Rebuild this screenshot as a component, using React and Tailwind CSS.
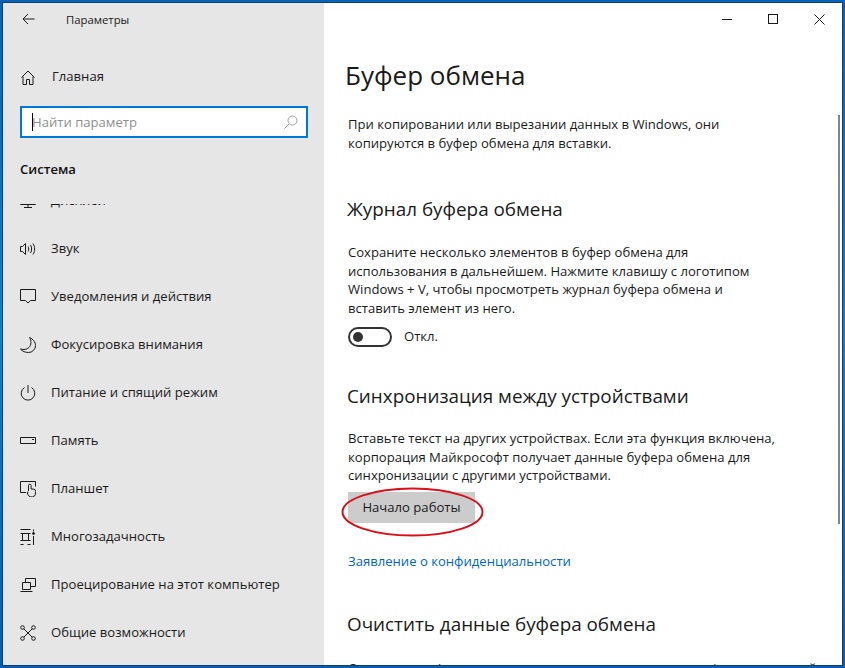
const font = { fontFamily: '"Open Sans", "Noto Sans", sans-serif' };

const s = { fill: "none", stroke: "#1a1a1a", strokeWidth: 1 };

const Ico = ({ children }) => (
  <svg width="16" height="16" viewBox="0 0 16 16" className="shrink-0" {...s}>{children}</svg>
);

const icons = {
  display: <Ico><path d="M.5 1.500h15v10H.5zM4 14.500h8M8 11.500v3" /></Ico>,
  sound: (
    <Ico>
      <path d="M.5 5.500h2l3-3v11l-3-3h-2z" />
      <path d="M8 5.500c1 1.500 1 3.500 0 5M10.500 4c1.500 2.500 1.500 5.500 0 8M13 2.500c2.200 3.500 2.200 7.500 0 11" />
    </Ico>
  ),
  notify: <Ico><path d="M.5 .5h15v11h-5l-2.500 2.500-2.500-2.500h-5z" /></Ico>,
  focus: <Ico><path d="M9.500.5c3.500 1.500 6 4.500 6 8a7 7 0 0 1-7 7c-3 0-6-1-8-3.500 3 1 6.500.5 8.500-1.500 2.500-2.500 2.500-7 .5-10z" /></Ico>,
  power: <Ico><path d="M8 0v8M4.500 2.500a6.800 6.800 0 1 0 7 0" /></Ico>,
  memory: <Ico><path d="M.5 4.500h15v6H.5zM12 6.500h2" /></Ico>,
  tablet: (
    <Ico>
      <path d="M6 11.500H.5V.5h15v5" />
      <path d="M8.500 10V4.500a1.300 1.300 0 0 1 2.600 0V8h2a2.500 2.500 0 0 1 2.500 2.500v1.500a4 4 0 0 1-7.500 2l-1-2.500 1.400-.5" fill="#e6e6e6" />
    </Ico>
  ),
  multi: (
    <Ico>
      <path d="M.5 .5h10M2.500 4.500h6v7h-6zM.5 4.500h10M.5 11.500h10M.5 15.500h3M7.500 15.500h3" />
      <path d="M13.500 .5v2M13.500 7v9" />
      <circle cx="13.500" cy="4.500" r="1" fill="#1a1a1a" />
    </Ico>
  ),
  project: (
    <Ico>
      <path d="M5.500 5V1.500h10v8h-5" />
      <path d="M2.500 5.500h8v7h-8zM.5 14.500h12" />
    </Ico>
  ),
  access: (
    <Ico>
      <circle cx="2.500" cy="2.500" r="1.800" />
      <circle cx="13.500" cy="2.500" r="1.800" />
      <circle cx="2.500" cy="13.500" r="1.800" />
      <circle cx="13.500" cy="13.500" r="1.800" />
      <path d="M3.800 3.800l8.400 8.400M12.200 3.800l-8.400 8.400" />
    </Ico>
  ),
};

const items = [
  ["Звук", "sound"],
  ["Уведомления и действия", "notify"],
  ["Фокусировка внимания", "focus"],
  ["Питание и спящий режим", "power"],
  ["Память", "memory"],
  ["Планшет", "tablet"],
  ["Многозадачность", "multi"],
  ["Проецирование на этот компьютер", "project"],
  ["Общие возможности", "access"],
];

const NavItem = ({ label, icon }) => (
  <div className="flex h-12 shrink-0 items-center pl-[17px]">
    <span className="flex w-[31px] shrink-0">{icons[icon]}</span>
    <span className="text-[13.1px] whitespace-nowrap text-[#1a1a1a]">{label}</span>
  </div>
);

const Para = ({ children, className = "" }) => (
  <p className={"text-[13.1px] leading-[18.7px] text-[#1a1a1a] " + className}>{children}</p>
);

const H2 = ({ children, className = "" }) => (
  <h2 className={"-ml-px text-[18.85px] leading-[26px] font-normal text-[#1a1a1a] " + className}>{children}</h2>
);

export default function App() {
  return (
    <div
      className="relative h-[668px] w-[845px] overflow-hidden bg-gradient-to-b from-[#0a63b5] via-[#0b7fd0] to-[#0a5cb0] p-[3px]"
      style={font}
    >
      <div className="flex h-[662px] w-[839px] overflow-hidden bg-white shadow-[0_0_0_1px_#0a3f78]">
        <aside className="flex h-full w-[321px] shrink-0 flex-col bg-[#e6e6e6]">
          <div className="flex h-8 items-center pl-[19px]">
            <svg width="13" height="12" viewBox="0 0 13 12" fill="none" stroke="#1a1a1a" strokeWidth="1">
              <path d="M12.500 6H1M6 1L1 6l5 5" />
            </svg>
            <span className="mt-[2px] ml-[31px] text-[11.300px] text-[#1a1a1a]">Параметры</span>
          </div>
          <div className="mt-[18px] flex h-12 items-center pl-[18px]">
            <svg width="14" height="15" viewBox="0 0 14 15" className="mr-[17px] shrink-0" fill="none" stroke="#1a1a1a">
              <path d="M.5 7.500L7 1l6.500 6.500M2 6.500v8h3.500v-5h3v5H12v-8" />
            </svg>
            <span className="text-[13.1px] text-[#1a1a1a]">Главная</span>
          </div>
          <div className="mt-[5px] ml-[17px] flex h-[32px] w-[288px] items-center justify-between border-2 border-[#0078d7] bg-white pr-[8px] pl-[10px]">
            <span className="flex items-center">
              <span className="mr-[-1px] h-[18px] w-px bg-black" />
              <span className="mt-[2px] text-[13.1px] text-[#8f8f8f]">Найти параметр</span>
            </span>
            <svg width="14" height="14" viewBox="0 0 14 14" fill="none" stroke="#a0a0a0">
              <circle cx="8.500" cy="5.500" r="4.500" />
              <path d="M5.300 8.700L.5 13.500" />
            </svg>
          </div>
          <div className="mt-[19px] ml-[17px] text-[13.1px] leading-[24px] font-semibold text-[#111]">Система</div>
          <div className="mt-[23px] flex min-h-0 flex-1 flex-col overflow-hidden">
            <div className="mt-[-27px] flex flex-col">
              <NavItem label="Дисплей" icon="display" />
              {items.map(([l, i]) => (
                <NavItem key={l} label={l} icon={i} />
              ))}
            </div>
          </div>
        </aside>
        <main className="relative min-w-0 flex-1 overflow-hidden">
          <div className="flex h-8 items-center justify-end">
            <div className="flex h-8 w-[46px] items-center justify-center">
              <div className="h-px w-[10px] bg-[#1a1a1a]" />
            </div>
            <div className="flex h-8 w-[46px] items-center justify-center">
              <div className="h-[10px] w-[10px] border border-[#1a1a1a]" />
            </div>
            <div className="flex h-8 w-[46px] items-center justify-center">
              <svg width="11" height="11" viewBox="0 0 11 11" stroke="#1a1a1a"><path d="M.5.5l10 10M10.500.5l-10 10" /></svg>
            </div>
          </div>
          <div className="pl-[24px]">
            <h1 className="mt-[21px] -ml-[3px] text-[26px] leading-[38px] font-normal text-[#1a1a1a]">Буфер обмена</h1>
            <Para className="mt-[21px]">
              При копировании или вырезании данных в Windows, они
              <br />
              копируются в буфер обмена для вставки.
            </Para>
            <H2 className="mt-[43.600px]">Журнал буфера обмена</H2>
            <Para className="mt-[21px]">
              Сохраните несколько элементов в буфер обмена для
              <br />
              использования в дальнейшем. Нажмите клавишу с логотипом
              <br />
              Windows + V, чтобы просмотреть журнал буфера обмена и
              <br />
              вставить элемент из него.
            </Para>
            <div className="mt-[9.200px] flex h-[20px] items-center">
              <div className="flex h-[20px] w-[44px] items-center rounded-full border-2 border-[#333] pl-[3px]">
                <div className="h-[10px] w-[10px] rounded-full bg-[#333]" />
              </div>
              <span className="ml-[12px] text-[13.1px] text-[#1a1a1a]">Откл.</span>
            </div>
            <H2 className="mt-[36px]">Синхронизация между устройствами</H2>
            <Para className="mt-[20px]">
              Вставьте текст на других устройствах. Если эта функция включена,
              <br />
              корпорация Майкрософт получает данные буфера обмена для
              <br />
              синхронизации с другими устройствами.
            </Para>
            <div className="mt-[6.900px] flex h-[31px] w-[127px] items-center justify-center bg-[#cccccc] text-[13.1px] text-[#1a1a1a]">
              Начало работы
            </div>
            <div className="mt-[29px] text-[13.1px] leading-[19px] text-[#0067c0]">Заявление о конфиденциальности</div>
            <H2 className="mt-[40px]">Очистить данные буфера обмена</H2>
            <Para className="mt-[22px] whitespace-nowrap">Очистить все (за исключением закрепленных элементов) на этом устройстве</Para>
          </div>
          <div className="absolute top-[112px] right-[2px] h-[409px] w-[2px] bg-[#858585]" />
        </main>
      </div>
      <svg className="absolute top-[487px] left-[341px]" width="144" height="51" viewBox="0 0 144 51" fill="none">
        <ellipse cx="71.500" cy="25" rx="70" ry="23.500" stroke="#d9101a" strokeWidth="2" />
      </svg>
    </div>
  );
}
